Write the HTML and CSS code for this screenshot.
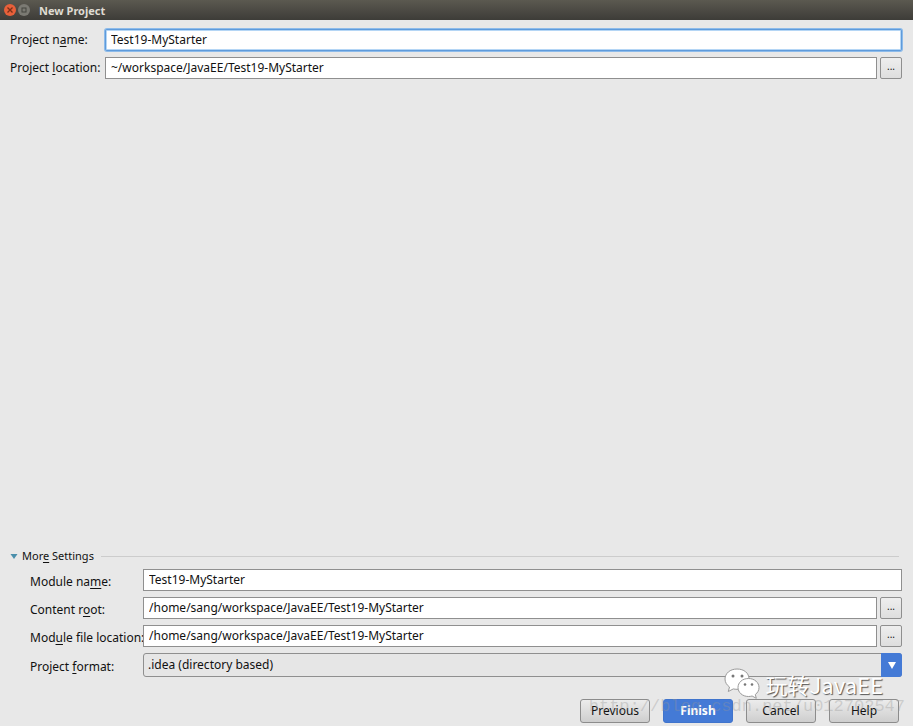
FILE: index.html
```html
<!DOCTYPE html>
<html lang="en">

<head>
    <meta charset="UTF-8">
    <meta name="viewport" content="width=device-width, initial-scale=1.0">
    <title>New Project</title>
    <link rel="stylesheet" href="styles.css">
</head>

<body>
    <!-- title bar -->
    <header class="titlebar">
        <button type="button" class="win-btn close" aria-label="Close">
            <svg width="12" height="12" viewBox="0 0 12 12"><path d="M3.500 3.500l5 5M8.500 3.500l-5 5" stroke="#7a3018" stroke-width="1.300" fill="none"/></svg>
        </button>
        <button type="button" class="win-btn max" aria-label="Maximize">
            <svg width="12" height="12" viewBox="0 0 12 12"><rect x="4" y="4" width="4" height="4" stroke="#45443f" fill="none"/></svg>
        </button>
        <h1>New Project</h1>
    </header>

    <form class="dialog">
        <div class="row">
            <label for="name">Project n<u>a</u>me:</label>
            <input type="text" id="name" class="active" value="Test19-MyStarter">
        </div>
        <div class="row">
            <label for="location">Project <u>l</u>ocation:</label>
            <input type="text" id="location" value="~/workspace/JavaEE/Test19-MyStarter">
            <button type="button" class="browse">...</button>
        </div>

        <!-- more settings -->
        <details class="more" open>
            <summary>
                <svg width="8" height="5" viewBox="0 0 8 5"><path d="M0.500 0h7L4 5z" fill="#4a8fab"/></svg>
                <span>Mor<u>e</u> Settings</span>
            </summary>
            <div class="settings">
                <div class="row">
                    <label for="module">Module na<u>m</u>e:</label>
                    <input type="text" id="module" value="Test19-MyStarter">
                </div>
                <div class="row">
                    <label for="root">Content r<u>o</u>ot:</label>
                    <input type="text" id="root" value="/home/sang/workspace/JavaEE/Test19-MyStarter">
                    <button type="button" class="browse">...</button>
                </div>
                <div class="row">
                    <label for="file">Mod<u>u</u>le file location:</label>
                    <input type="text" id="file" value="/home/sang/workspace/JavaEE/Test19-MyStarter">
                    <button type="button" class="browse">...</button>
                </div>
                <div class="row">
                    <label for="format">Project <u>f</u>ormat:</label>
                    <div class="select">
                        <select id="format">
                            <option>.idea (directory based)</option>
                        </select>
                        <span class="arrow">
                            <svg width="8" height="7" viewBox="0 0 8 7"><path d="M0 0h8L4 7z" fill="#fff"/></svg>
                        </span>
                    </div>
                </div>
            </div>
        </details>

        <div class="buttons">
            <button type="button">Previous</button>
            <button type="submit" class="primary">Finish</button>
            <button type="button">Cancel</button>
            <button type="button">Help</button>
        </div>
    </form>

    <!-- watermarks -->
    <div class="url">http://blog.csdn.net/u012702547</div>
    <div class="brand">
        <svg width="36" height="32" viewBox="0 0 36 32">
            <g fill="#fff" stroke="#9a9a9a" stroke-width="1">
                <path d="M13 1C6 1 1 5.500 1 11c0 3.200 1.700 6 4.500 8L4.300 23.500l5-2.600c1.200.3 2.400.4 3.700.4C20 21.300 25 17 25 11S20 1 13 1z"/>
                <path d="M24.500 10.500C18.300 10.500 14 14.500 14 19.500s4.500 9 10.500 9c1.300 0 2.500-.2 3.600-.5l4.200 2.300-1-3.800c2.400-1.700 3.700-4.200 3.700-7 0-5-4.500-9-10.500-9z"/>
            </g>
            <g fill="#777">
                <circle cx="9" cy="8" r="1.500"/>
                <circle cx="18" cy="8" r="1.500"/>
                <circle cx="21" cy="16.500" r="1.300"/>
                <circle cx="28" cy="16.500" r="1.300"/>
            </g>
        </svg>
        <span>玩转JavaEE</span>
    </div>
</body>

</html>
```

FILE: styles.css
```css
* {
    box-sizing: border-box;
    margin: 0;
    padding: 0;
}

body {
    position: relative;
    display: flex;
    flex-direction: column;
    min-height: 100vh;
    overflow-x: hidden;
    background: #e8e8e8;
    color: #111;
    font-family: "Noto Sans", "Noto Sans CJK SC", sans-serif;
    font-size: 12px;
    line-height: 16px;
}

input,
select,
button {
    font: inherit;
    color: inherit;
}

u {
    text-underline-offset: 2px;
}
/* title bar */

.titlebar {
    display: flex;
    align-items: center;
    gap: 2px;
    height: 20px;
    padding-left: 4px;
    background: linear-gradient(#5b5950, #3d3c38);
}

.titlebar h1 {
    margin-left: 7px;
    padding-top: 2px;
    color: #dfdbd2;
    font-size: 11px;
    line-height: 16px;
}

.win-btn {
    width: 12px;
    height: 12px;
    border: 0;
    border-radius: 50%;
}

.win-btn svg {
    display: block;
}

.close {
    background: #e8603a;
}

.max {
    background: #7b7a73;
}
/* form rows */

.dialog {
    flex: 1;
    display: flex;
    flex-direction: column;
    padding: 9px 11px 3px 10px;
}

.row {
    display: flex;
    align-items: center;
    margin-bottom: 6px;
}

.row label {
    flex: none;
    width: 95px;
    white-space: nowrap;
}

.row input {
    flex: 1;
    min-width: 0;
    height: 22px;
    padding: 0 5px 2px;
    border: 1px solid #8f8f8f;
    background: #fff;
    outline: none;
}

.row .active {
    border-color: #5f9bdb;
    border-radius: 2px;
    box-shadow: 0 0 0 1px #8dbbea, inset 0 0 0 1px #b5d6f5;
}

.browse {
    width: 22px;
    height: 22px;
    margin-left: 3px;
    padding-bottom: 4px;
    border: 1px solid #8f8f8f;
    border-radius: 2px;
    background: linear-gradient(#eee, #dedede);
    font-size: 10px;
    line-height: 14px;
}
/* more settings */

.more {
    margin-top: auto;
}

.more summary {
    display: flex;
    align-items: center;
    gap: 4px;
    margin-bottom: 5px;
    font-size: 11px;
    list-style: none;
}

.more summary::after {
    content: "";
    flex: 1;
    height: 1px;
    margin: 0 3px;
    background: #ccc;
}

.settings {
    padding-left: 20px;
}

.settings .row label {
    width: 113px;
    padding-top: 3px;
}

.select {
    position: relative;
    flex: 1;
}

.select select {
    display: block;
    width: 100%;
    height: 24px;
    padding: 0 24px 0 4px;
    border: 1px solid #8f8f8f;
    border-radius: 3px;
    background: #e6e6e6;
    appearance: none;
}

.select .arrow {
    position: absolute;
    top: 0;
    right: 0;
    display: flex;
    align-items: center;
    justify-content: center;
    width: 21px;
    height: 24px;
    border-radius: 0 3px 3px 0;
    background: #447ad6;
    pointer-events: none;
}
/* bottom buttons */

.buttons {
    display: flex;
    justify-content: flex-end;
    gap: 13px;
    padding: 16px 3px 0 0;
}

.buttons button {
    width: 70px;
    height: 24px;
    padding-bottom: 1px;
    border: 1px solid #8c8c8c;
    border-radius: 3px;
    background: linear-gradient(#ececec, #cecece);
}

.buttons .primary {
    border-color: #4074cc;
    background: #447ad6;
    color: #fff;
    font-weight: bold;
}
/* watermarks */

.url {
    position: absolute;
    right: 8px;
    bottom: 9px;
    color: rgba(150, 150, 150, .35);
    font-family: "Liberation Mono", monospace;
    font-size: 17px;
    line-height: 20px;
    pointer-events: none;
}

.brand {
    position: absolute;
    right: 30px;
    bottom: 26px;
    display: flex;
    align-items: center;
    gap: 6px;
    color: #fff;
    font-family: "Noto Sans CJK SC", sans-serif;
    font-size: 22px;
    line-height: 32px;
    text-shadow: 1px 1px 1px #555;
    pointer-events: none;
}
```
